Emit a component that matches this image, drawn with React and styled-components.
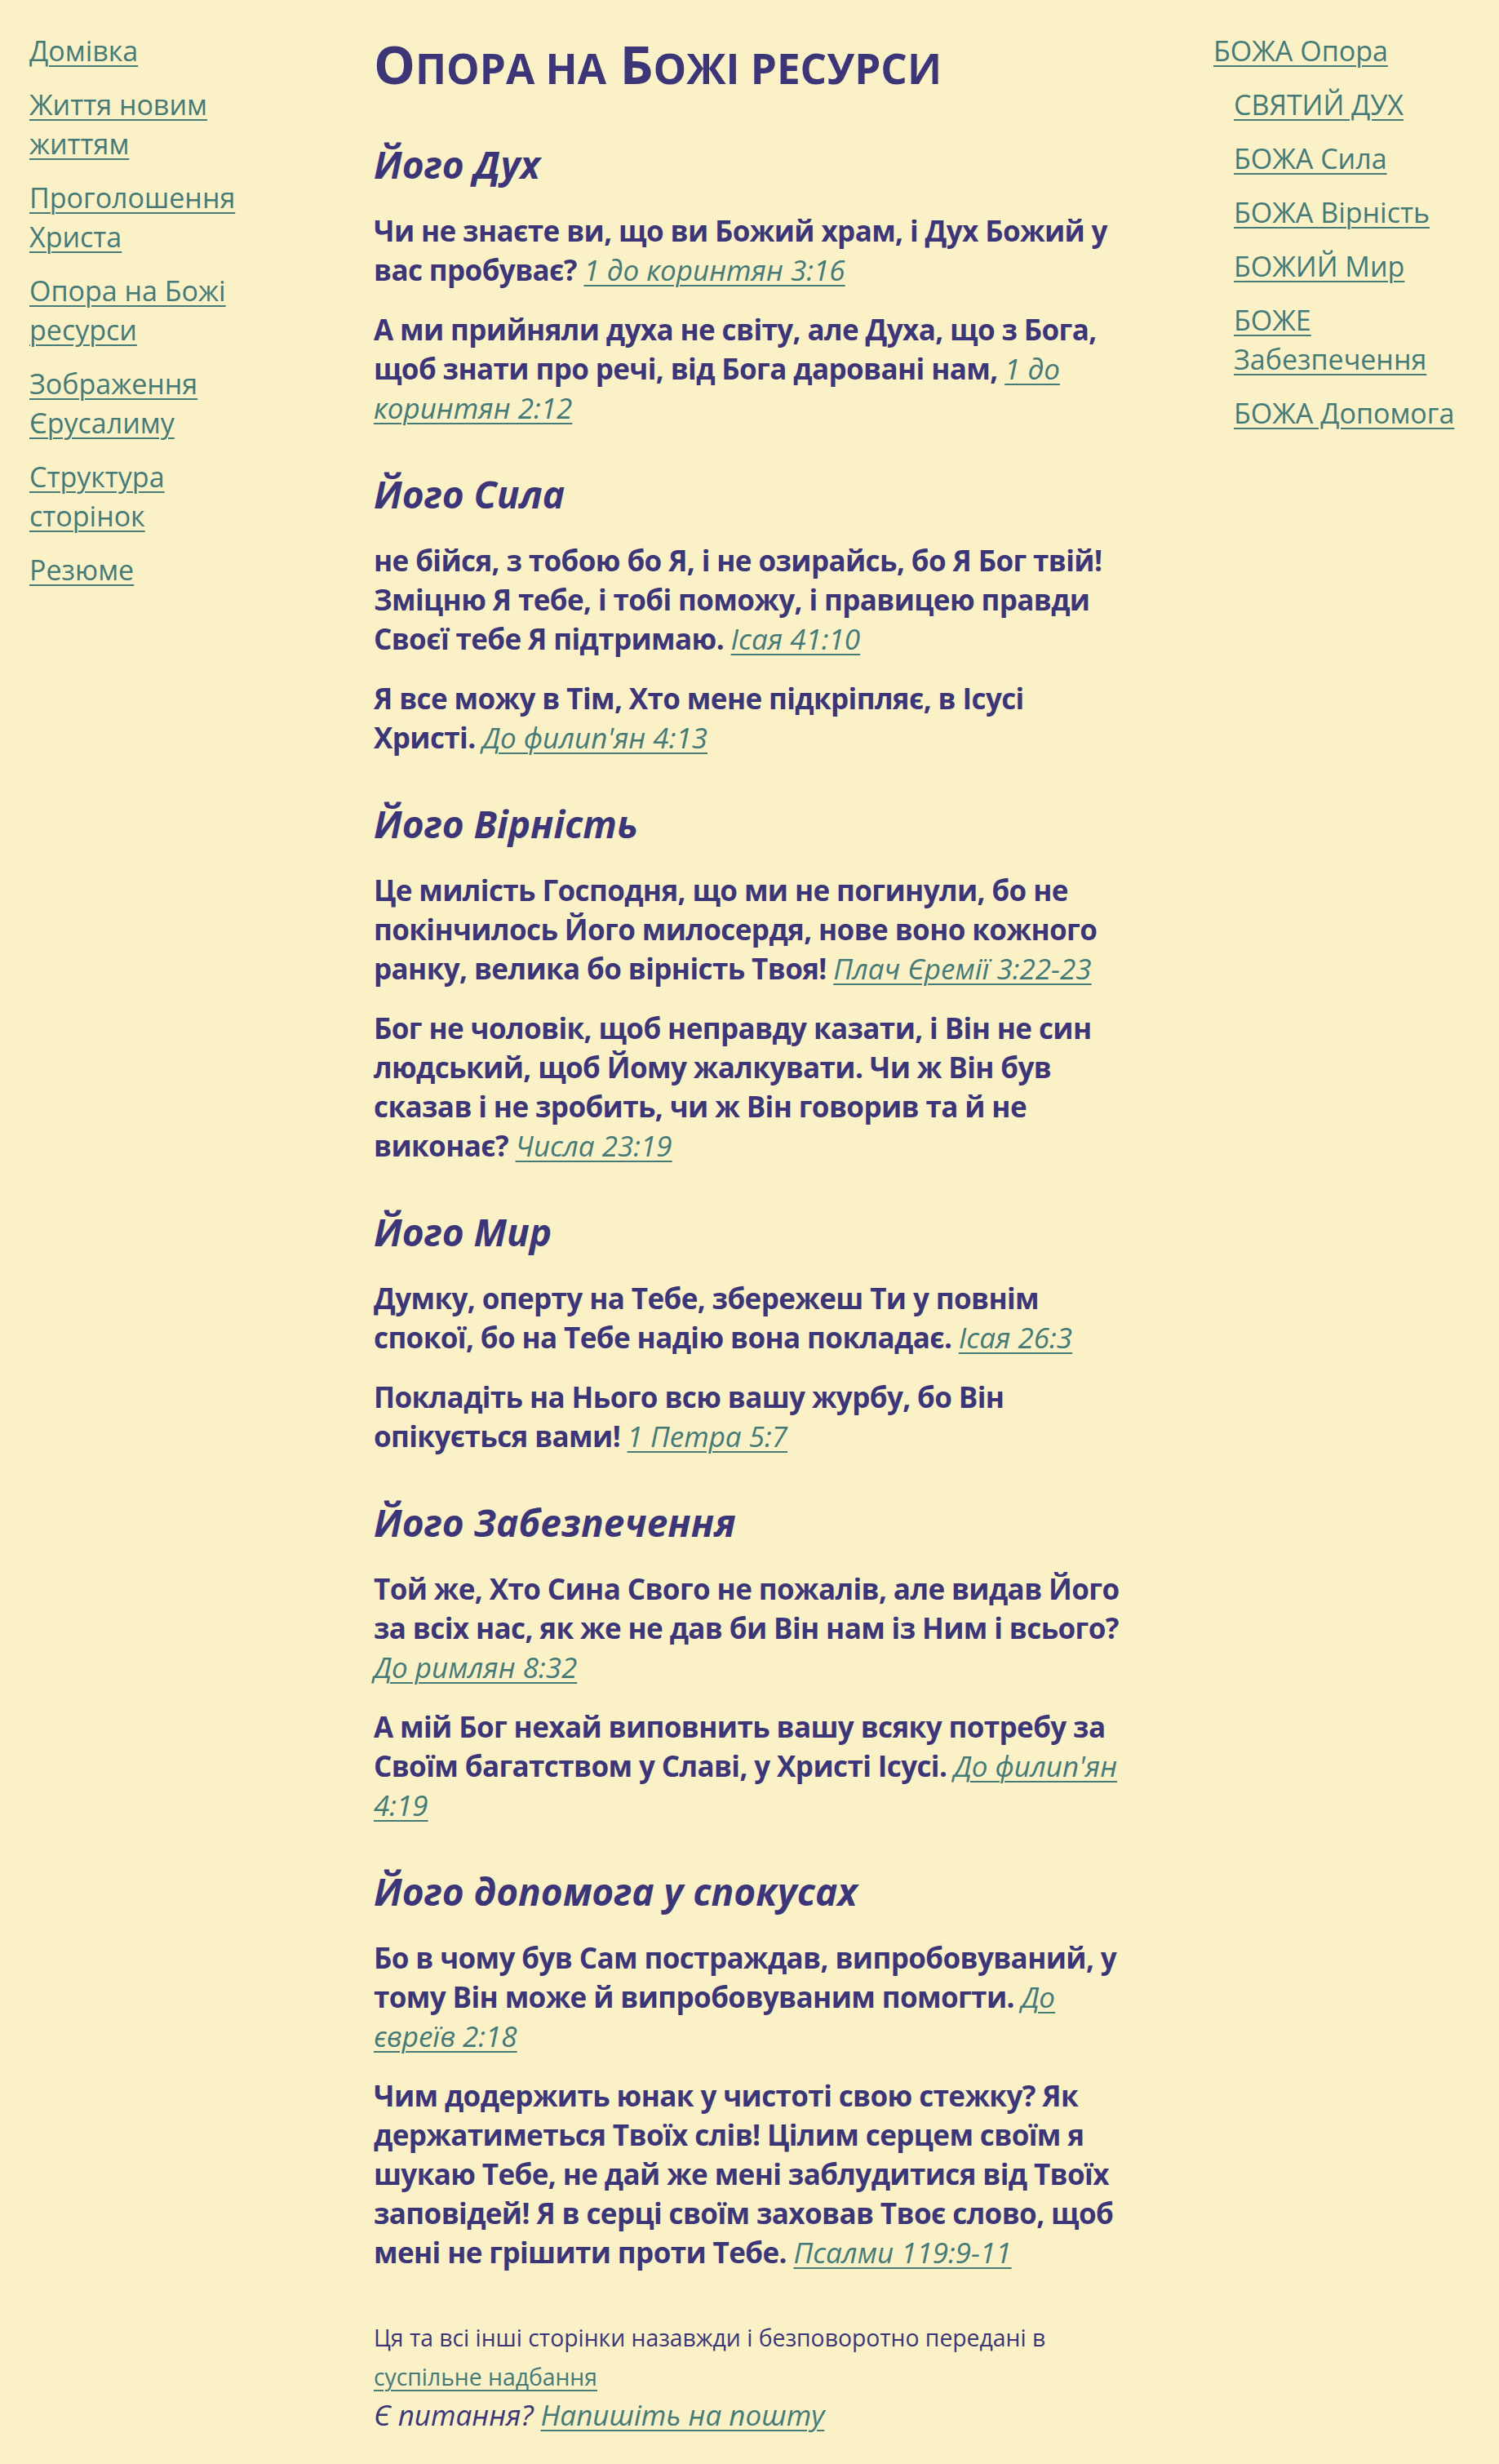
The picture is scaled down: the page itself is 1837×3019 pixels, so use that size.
import React from 'react';
import styled, { createGlobalStyle } from 'styled-components';

const GlobalStyle = createGlobalStyle`
  html, body {
    margin: 0;
    padding: 0;
    background: #fbf1c7;
  }
  body {
    font-family: "Open Sans", "Noto Sans", sans-serif;
    color: #3c3678;
  }
`;

const Page = styled.div`
  display: grid;
  grid-template-columns: 422px 1029px 1fr;
  padding: 0 36px;
  min-height: 3019px;
  box-sizing: border-box;
`;

const SideNav = styled.ul`
  list-style: none;
  margin: 0;
  padding: 38px 0 0;
  max-width: 300px;
`;

const NavItem = styled.li`
  margin: 0 0 18px ${(p) => (p.$sub ? '25px' : '0')};
  font-size: 34px;
  line-height: 48px;
`;

const NavLink = styled.a`
  color: #457a77;
  text-decoration: underline;
  text-underline-offset: 5px;
  text-decoration-thickness: 2px;
`;

const Main = styled.main`
  max-width: 922px;
`;

const Title = styled.h1`
  margin: 43px 0 54px;
  font-size: 64px;
  line-height: 72px;
  font-weight: 700;
`;

const SmallCaps = styled.span`
  font-size: 0.8em;
  text-transform: uppercase;
`;

const SectionTitle = styled.h2`
  margin: 53px 0 30px;
  font-size: 46px;
  line-height: 56px;
  font-style: italic;
  font-weight: 700;
`;

const Verse = styled.p`
  margin: 25px 0;
  font-size: 35px;
  line-height: 48px;
  font-weight: 700;
  letter-spacing: -0.6px;
`;

const Ref = styled.a`
  color: #457a77;
  font-weight: 400;
  font-style: italic;
  letter-spacing: 0;
  text-decoration: underline;
  text-underline-offset: 5px;
  text-decoration-thickness: 2px;
`;

const Footer = styled.footer`
  margin-top: 56px;
`;

const Notice = styled.p`
  margin: 0;
  font-size: 28.3px;
  line-height: 48px;
`;

const Contact = styled.p`
  margin: 0;
  font-size: 35px;
  line-height: 45px;
  font-style: italic;
`;

const leftLinks = [
  'Домівка',
  'Життя новим життям',
  'Проголошення Христа',
  'Опора на Божі ресурси',
  'Зображення Єрусалиму',
  'Структура сторінок',
  'Резюме',
];

const rightLinks = [
  { text: 'БОЖА Опора' },
  { text: 'СВЯТИЙ ДУХ', sub: true },
  { text: 'БОЖА Сила', sub: true },
  { text: 'БОЖА Вірність', sub: true },
  { text: 'БОЖИЙ Мир', sub: true },
  { text: 'БОЖЕ Забезпечення', sub: true },
  { text: 'БОЖА Допомога', sub: true },
];

const sections = [
  {
    title: 'Його Дух',
    verses: [
      ['Чи не знаєте ви, що ви Божий храм, і Дух Божий у вас пробуває?', '1 до коринтян 3:16'],
      ['А ми прийняли духа не світу, але Духа, що з Бога, щоб знати про речі, від Бога даровані нам,', '1 до коринтян 2:12'],
    ],
  },
  {
    title: 'Його Сила',
    verses: [
      ['не бійся, з тобою бо Я, і не озирайсь, бо Я Бог твій! Зміцню Я тебе, і тобі поможу, і правицею правди Своєї тебе Я підтримаю.', 'Ісая 41:10'],
      ['Я все можу в Тім, Хто мене підкріпляє, в Ісусі Христі.', "До филип'ян 4:13"],
    ],
  },
  {
    title: 'Його Вірність',
    verses: [
      ['Це милість Господня, що ми не погинули, бо не покінчилось Його милосердя, нове воно кожного ранку, велика бо вірність Твоя!', 'Плач Єремії 3:22-23'],
      ['Бог не чоловік, щоб неправду казати, і Він не син людський, щоб Йому жалкувати. Чи ж Він був сказав і не зробить, чи ж Він говорив та й не виконає?', 'Числа 23:19'],
    ],
  },
  {
    title: 'Його Мир',
    verses: [
      ['Думку, оперту на Тебе, збережеш Ти у повнім спокої, бо на Тебе надію вона покладає.', 'Ісая 26:3'],
      ['Покладіть на Нього всю вашу журбу, бо Він опікується вами!', '1 Петра 5:7'],
    ],
  },
  {
    title: 'Його Забезпечення',
    verses: [
      ['Той же, Хто Сина Свого не пожалів, але видав Його за всіх нас, як же не дав би Він нам із Ним і всього?', 'До римлян 8:32'],
      ['А мій Бог нехай виповнить вашу всяку потребу за Своїм багатством у Славі, у Христі Ісусі.', "До филип'ян 4:19"],
    ],
  },
  {
    title: 'Його допомога у спокусах',
    verses: [
      ['Бо в чому був Сам постраждав, випробовуваний, у тому Він може й випробовуваним помогти.', 'До євреїв 2:18'],
      ['Чим додержить юнак у чистоті свою стежку? Як держатиметься Твоїх слів! Цілим серцем своїм я шукаю Тебе, не дай же мені заблудитися від Твоїх заповідей! Я в серці своїм заховав Твоє слово, щоб мені не грішити проти Тебе.', 'Псалми 119:9-11'],
    ],
  },
];

export default function App() {
  return (
    <>
      <GlobalStyle />
      <Page>
        <nav>
          <SideNav>
            {leftLinks.map((t) => (
              <NavItem key={t}>
                <NavLink href="#">{t}</NavLink>
              </NavItem>
            ))}
          </SideNav>
        </nav>

        <Main>
          <Title>
            О<SmallCaps>пора на</SmallCaps> Б<SmallCaps>ожі ресурси</SmallCaps>
          </Title>

          {sections.map((s) => (
            <section key={s.title}>
              <SectionTitle>{s.title}</SectionTitle>
              {s.verses.map(([text, ref]) => (
                <Verse key={ref}>
                  {text} <Ref href="#">{ref}</Ref>
                </Verse>
              ))}
            </section>
          ))}

          <Footer>
            <Notice>
              Ця та всі інші сторінки назавжди і безповоротно передані в{' '}
              <NavLink href="#">суспільне надбання</NavLink>
            </Notice>
            <Contact>
              Є питання? <Ref href="#">Напишіть на пошту</Ref>
            </Contact>
          </Footer>
        </Main>

        <aside>
          <SideNav>
            {rightLinks.map((l) => (
              <NavItem key={l.text} $sub={l.sub}>
                <NavLink href="#">{l.text}</NavLink>
              </NavItem>
            ))}
          </SideNav>
        </aside>
      </Page>
    </>
  );
}
